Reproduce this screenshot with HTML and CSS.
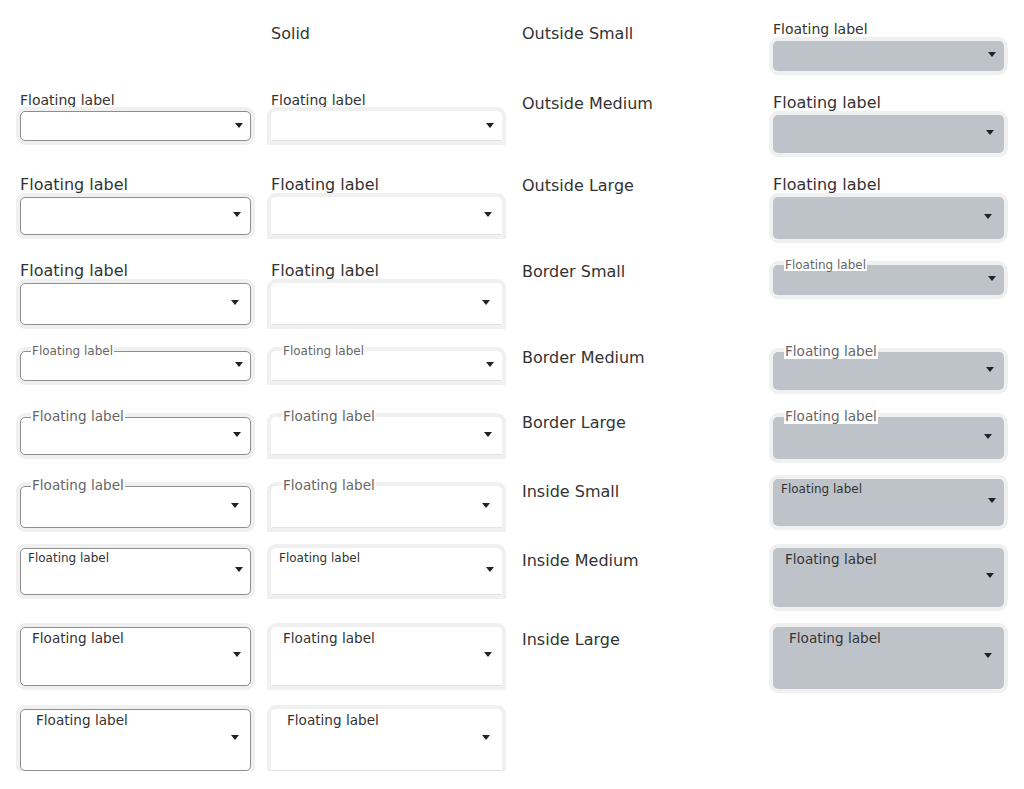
FILE: index.html
```html
<!DOCTYPE html>
<html lang="en">
<head>
<meta charset="utf-8">
<title>Select variants</title>
<link rel="stylesheet" href="styles.css">
</head>
<body>
<main class="page">
  <!-- row 1 -->
  <div class="cell"></div>
  <div class="heading">Solid</div>
  <div class="heading">Outside Small</div>
  <div class="field outside sm filled"><label class="lbl">Floating label</label><div class="box"><svg class="caret" viewBox="0 0 8 5" width="8" height="5"><path d="M0 0h8L4 5z"/></svg></div></div>

  <!-- row 2 -->
  <div class="field outside sm outlined"><label class="lbl">Floating label</label><div class="box"><svg class="caret" viewBox="0 0 8 5" width="8" height="5"><path d="M0 0h8L4 5z"/></svg></div></div>
  <div class="field outside sm solid"><label class="lbl">Floating label</label><div class="box"><svg class="caret" viewBox="0 0 8 5" width="8" height="5"><path d="M0 0h8L4 5z"/></svg></div></div>
  <div class="heading">Outside Medium</div>
  <div class="field outside md filled"><label class="lbl">Floating label</label><div class="box"><svg class="caret" viewBox="0 0 8 5" width="8" height="5"><path d="M0 0h8L4 5z"/></svg></div></div>

  <!-- row 3 -->
  <div class="field outside md outlined"><label class="lbl">Floating label</label><div class="box"><svg class="caret" viewBox="0 0 8 5" width="8" height="5"><path d="M0 0h8L4 5z"/></svg></div></div>
  <div class="field outside md solid"><label class="lbl">Floating label</label><div class="box"><svg class="caret" viewBox="0 0 8 5" width="8" height="5"><path d="M0 0h8L4 5z"/></svg></div></div>
  <div class="heading">Outside Large</div>
  <div class="field outside lg filled"><label class="lbl">Floating label</label><div class="box"><svg class="caret" viewBox="0 0 8 5" width="8" height="5"><path d="M0 0h8L4 5z"/></svg></div></div>

  <!-- row 4 -->
  <div class="field outside lg outlined"><label class="lbl">Floating label</label><div class="box"><svg class="caret" viewBox="0 0 8 5" width="8" height="5"><path d="M0 0h8L4 5z"/></svg></div></div>
  <div class="field outside lg solid"><label class="lbl">Floating label</label><div class="box"><svg class="caret" viewBox="0 0 8 5" width="8" height="5"><path d="M0 0h8L4 5z"/></svg></div></div>
  <div class="heading">Border Small</div>
  <div class="field border sm filled"><div class="box"><label class="lbl">Floating label</label><svg class="caret" viewBox="0 0 8 5" width="8" height="5"><path d="M0 0h8L4 5z"/></svg></div></div>

  <!-- row 5 -->
  <div class="field border sm outlined"><div class="box"><label class="lbl">Floating label</label><svg class="caret" viewBox="0 0 8 5" width="8" height="5"><path d="M0 0h8L4 5z"/></svg></div></div>
  <div class="field border sm solid"><div class="box"><label class="lbl">Floating label</label><svg class="caret" viewBox="0 0 8 5" width="8" height="5"><path d="M0 0h8L4 5z"/></svg></div></div>
  <div class="heading">Border Medium</div>
  <div class="field border md filled"><div class="box"><label class="lbl">Floating label</label><svg class="caret" viewBox="0 0 8 5" width="8" height="5"><path d="M0 0h8L4 5z"/></svg></div></div>

  <!-- row 6 -->
  <div class="field border md outlined"><div class="box"><label class="lbl">Floating label</label><svg class="caret" viewBox="0 0 8 5" width="8" height="5"><path d="M0 0h8L4 5z"/></svg></div></div>
  <div class="field border md solid"><div class="box"><label class="lbl">Floating label</label><svg class="caret" viewBox="0 0 8 5" width="8" height="5"><path d="M0 0h8L4 5z"/></svg></div></div>
  <div class="heading">Border Large</div>
  <div class="field border lg filled"><div class="box"><label class="lbl">Floating label</label><svg class="caret" viewBox="0 0 8 5" width="8" height="5"><path d="M0 0h8L4 5z"/></svg></div></div>

  <!-- row 7 -->
  <div class="field border lg outlined"><div class="box"><label class="lbl">Floating label</label><svg class="caret" viewBox="0 0 8 5" width="8" height="5"><path d="M0 0h8L4 5z"/></svg></div></div>
  <div class="field border lg solid"><div class="box"><label class="lbl">Floating label</label><svg class="caret" viewBox="0 0 8 5" width="8" height="5"><path d="M0 0h8L4 5z"/></svg></div></div>
  <div class="heading">Inside Small</div>
  <div class="field inside sm filled"><div class="box"><label class="lbl">Floating label</label><svg class="caret" viewBox="0 0 8 5" width="8" height="5"><path d="M0 0h8L4 5z"/></svg></div></div>

  <!-- row 8 -->
  <div class="field inside sm outlined"><div class="box"><label class="lbl">Floating label</label><svg class="caret" viewBox="0 0 8 5" width="8" height="5"><path d="M0 0h8L4 5z"/></svg></div></div>
  <div class="field inside sm solid"><div class="box"><label class="lbl">Floating label</label><svg class="caret" viewBox="0 0 8 5" width="8" height="5"><path d="M0 0h8L4 5z"/></svg></div></div>
  <div class="heading">Inside Medium</div>
  <div class="field inside md filled"><div class="box"><label class="lbl">Floating label</label><svg class="caret" viewBox="0 0 8 5" width="8" height="5"><path d="M0 0h8L4 5z"/></svg></div></div>

  <!-- row 9 -->
  <div class="field inside md outlined"><div class="box"><label class="lbl">Floating label</label><svg class="caret" viewBox="0 0 8 5" width="8" height="5"><path d="M0 0h8L4 5z"/></svg></div></div>
  <div class="field inside md solid"><div class="box"><label class="lbl">Floating label</label><svg class="caret" viewBox="0 0 8 5" width="8" height="5"><path d="M0 0h8L4 5z"/></svg></div></div>
  <div class="heading">Inside Large</div>
  <div class="field inside lg filled"><div class="box"><label class="lbl">Floating label</label><svg class="caret" viewBox="0 0 8 5" width="8" height="5"><path d="M0 0h8L4 5z"/></svg></div></div>

  <!-- row 10 -->
  <div class="field inside lg outlined"><div class="box"><label class="lbl">Floating label</label><svg class="caret" viewBox="0 0 8 5" width="8" height="5"><path d="M0 0h8L4 5z"/></svg></div></div>
  <div class="field inside lg solid"><div class="box"><label class="lbl">Floating label</label><svg class="caret" viewBox="0 0 8 5" width="8" height="5"><path d="M0 0h8L4 5z"/></svg></div></div>
</main>
</body>
</html>
```

FILE: styles.css
```css
html, body {
  margin: 0;
  background: #ffffff;
}

body {
  font-family: "DejaVu Sans", "Noto Sans", sans-serif;
  color: #333333;
}

.page {
  display: grid;
  grid-template-columns: repeat(4, 231px);
  column-gap: 20px;
  row-gap: 20px;
  align-items: start;
  padding: 20px 0 0 20px;
}

.heading {
  font-size: 16px;
  line-height: 24px;
  padding-top: 1.5px;
  color: #333333;
}

/* ---------- box (the select control) ---------- */
.box {
  position: relative;
  box-sizing: border-box;
  display: flex;
  align-items: center;
  justify-content: flex-end;
  border: 1px solid transparent;
}

.caret {
  display: block;
  flex: none;
  fill: #222222;
  margin-bottom: 2px;
}

.outlined .box {
  background: #ffffff;
  border-color: #8e8e8e;
  border-radius: 5px;
  box-shadow: 0 0 0 4px #f0f0f0;
}

.solid .box {
  background: #ffffff;
  border-color: transparent;
  border-bottom-color: #e1e1e8;
  border-radius: 5px 5px 0 0;
  box-shadow: 0 0 0 4px #f0f0f0;
}

.filled .box {
  background: #bec3ca;
  border-radius: 5px;
  box-shadow: 0 0 0 4px #f0f0f0;
}

/* sizes */
.sm .box { height: 30px; padding-right: 7.5px; }
.md .box { height: 38px; padding-right: 9.5px; }
.lg .box { height: 42px; padding-right: 11.5px; }

/* ---------- label outside ---------- */
.outside .lbl {
  display: block;
  color: #333333;
}
.outside.sm .lbl {
  font-size: 14px;
  line-height: 19px;
  margin-bottom: 1.5px;
}
.outside.md .lbl,
.outside.lg .lbl {
  font-size: 16px;
  line-height: 24px;
}

/* ---------- label on the border ---------- */
.border.sm { padding-top: 6px; }
.border.md,
.border.lg { padding-top: 7px; }

.border .lbl {
  position: absolute;
  left: 10px;
  padding: 0 1px;
  background: #ffffff;
  color: #666666;
  line-height: 1;
  white-space: nowrap;
}
.border.sm .lbl {
  font-size: 12px;
  top: -6.5px;
}
.border.md .lbl,
.border.lg .lbl {
  font-size: 13.6px;
  top: -7.3px;
}

/* ---------- label inside ---------- */
.inside .box {
  display: grid;
  grid-template-columns: 1fr auto;
  align-items: start;
}
.inside .lbl {
  align-self: start;
  color: #333333;
  line-height: 1.5;
  white-space: nowrap;
}
.inside .caret {
  align-self: center;
  margin-bottom: 4px;
}
.inside.sm .box { height: 47px; padding-left: 7px; }
.inside.md .box { height: 59px; padding-left: 11px; }
.inside.lg .box { height: 62px; padding-left: 15px; }
.inside.sm .lbl { font-size: 12px; }
.inside.md .lbl,
.inside.lg .lbl { font-size: 13.6px; }
```
